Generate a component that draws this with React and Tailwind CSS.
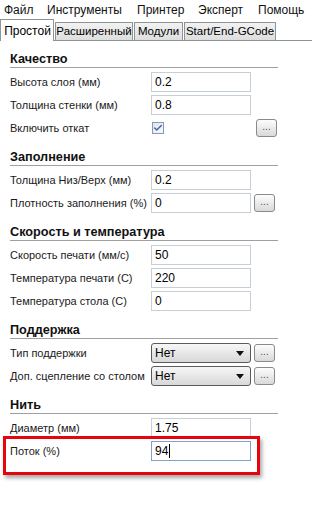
import { Check } from "lucide-react";

const font = { fontFamily: '"Liberation Sans", Arial, sans-serif' };

function Menu() {
  const items = [
    ["Файл", "w-[43px]"],
    ["Инструменты", "w-[90px]"],
    ["Принтер", "w-[61px]"],
    ["Эксперт", "w-[60px]"],
    ["Помощь", "w-[50px]"],
  ];
  return (
    <div className="flex h-[20px] items-center pl-[4px] text-[12px] whitespace-nowrap text-[#111]">
      {items.map(([m, w]) => (
        <span key={m} className={w}>
          {m}
        </span>
      ))}
    </div>
  );
}

function Tabs() {
  const rest = [
    ["Расширенный", "w-[78px]"],
    ["Модули", "w-[49px]"],
    ["Start/End-GCode", "w-[92px]"],
  ];
  return (
    <div className="flex h-[21px] items-end border-b border-[#8e9596] text-[11.5px] whitespace-nowrap">
      <div className="relative z-10 -mb-px flex h-[22px] w-[54px] items-center justify-center border border-b-0 border-[#8e9596] bg-white pl-[1px] text-[12px]">
        Простой
      </div>
      {rest.map(([t, w]) => (
        <div
          key={t}
          className={`ml-[1px] flex h-[18px] items-center justify-center border border-b-0 border-[#8e9596] bg-gradient-to-b from-[#f2f2f2] to-[#dedede] ${w}`}
        >
          {t}
        </div>
      ))}
    </div>
  );
}

function Title({ children, first }) {
  return (
    <div
      className={`${first ? "mt-[11px]" : "mt-[12px]"} mb-[4px] flex h-[16px] w-[268px] items-start border-b border-[#a0a0a0] text-[12.7px] leading-[14px] font-bold whitespace-nowrap text-[#111]`}
    >
      {children}
    </div>
  );
}

function Dots({ className = "" }) {
  return (
    <div
      className={`flex h-[18px] w-[21px] items-center justify-center rounded-[3px] border border-[#8a8a8a] bg-gradient-to-b from-[#fdfdfd] to-[#d9d9d9] pb-[4px] text-[10px] text-[#555] ${className}`}
    >
      ...
    </div>
  );
}

function Input({ value, focus }) {
  return (
    <div
      className={`flex h-[20px] w-[100px] items-center border bg-white px-[3px] text-[12px] ${
        focus ? "border-[#7fa3cc]" : "border-[#c6ced6]"
      }`}
    >
      {value}
      {focus && <span className="ml-[1px] h-[14px] w-px bg-black" />}
    </div>
  );
}

function Select({ value }) {
  return (
    <div className="flex h-[20px] w-[100px] items-center justify-between rounded-[3px] border border-[#5a5a5a] bg-gradient-to-b from-[#f7f7f7] to-[#d8d8d8] pr-[6px] pl-[3px] text-[12px]">
      {value}
      <svg width="8" height="5" viewBox="0 0 8 5">
        <path d="M0 0h8L4 5z" fill="#111" />
      </svg>
    </div>
  );
}

function Row({ label, children, extra }) {
  return (
    <div className="mb-[3px] flex h-[20px] items-center">
      <div className="w-[141px] text-[11px] whitespace-nowrap text-[#1a1a1a]">{label}</div>
      {children}
      {extra}
    </div>
  );
}

export default function App() {
  return (
    <div className="relative h-[526px] w-[312px] overflow-hidden bg-white" style={font}>
      <Menu />
      <Tabs />
      <div className="pl-[10px]">
        <Title first>Качество</Title>
        <Row label="Высота слоя (мм)">
          <Input value="0.2" />
        </Row>
        <Row label="Толщина стенки (мм)">
          <Input value="0.8" />
        </Row>
        <Row label="Включить откат" extra={<Dots className="ml-[92px]" />}>
          <div className="ml-[1px] flex h-[12px] w-[12px] items-center justify-center border border-[#8a9aae] bg-gradient-to-br from-[#dfe5ee] to-[#f7f9fb]">
            <Check size={10} strokeWidth={3.5} className="text-[#4a62a8]" />
          </div>
        </Row>

        <Title>Заполнение</Title>
        <Row label="Толщина Низ/Верх (мм)">
          <Input value="0.2" />
        </Row>
        <Row label="Плотность заполнения (%)" extra={<Dots className="ml-[3px]" />}>
          <Input value="0" />
        </Row>

        <Title>Скорость и температура</Title>
        <Row label="Скорость печати (мм/с)">
          <Input value="50" />
        </Row>
        <Row label="Температура печати (C)">
          <Input value="220" />
        </Row>
        <Row label="Температура стола (C)">
          <Input value="0" />
        </Row>

        <Title>Поддержка</Title>
        <Row label="Тип поддержки" extra={<Dots className="ml-[3px]" />}>
          <Select value="Нет" />
        </Row>
        <Row label="Доп. сцепление со столом" extra={<Dots className="ml-[3px]" />}>
          <Select value="Нет" />
        </Row>

        <Title>Нить</Title>
        <Row label="Диаметр (мм)">
          <Input value="1.75" />
        </Row>
        <Row label="Поток (%)">
          <Input value="94" focus />
        </Row>
      </div>
      <div className="absolute top-[436px] left-[3px] h-[39px] w-[257px] border-[3px] border-[#e4050f] shadow-[2px_3px_4px_rgba(0,0,0,0.35)]" />
    </div>
  );
}
